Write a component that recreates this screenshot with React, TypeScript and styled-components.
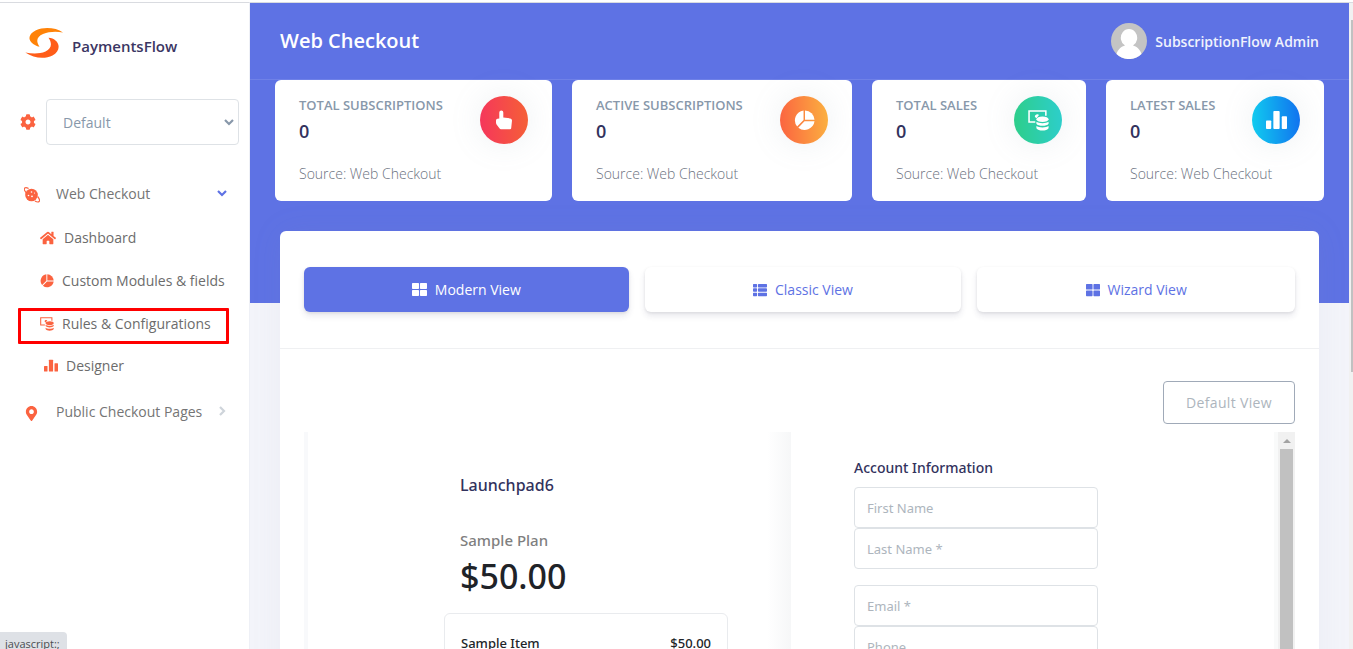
import React from 'react';
import styled, { createGlobalStyle } from 'styled-components';
import { FaCog, FaHome, FaMapMarkerAlt, FaThLarge, FaThList } from 'react-icons/fa';

const GlobalStyle = createGlobalStyle`
  *, *::before, *::after { box-sizing: border-box; }
  body { margin: 0; background: #f8f9fe; font-family: 'Open Sans', sans-serif; font-size: 14px; line-height: 20px; color: #525f7f; }
  h1, h2, h3, p, ul { margin: 0; padding: 0; }
  ul { list-style: none; }
  a { text-decoration: none; color: inherit; }
  button, input, select { font: inherit; }
  svg { display: block; flex: none; }
`;

const Page = styled.div`
  display: flex;
  height: 100vh;
  overflow: hidden;
  padding-top: 2px;
  background: #fff;
`;
const Sidebar = styled.aside`
  flex: none;
  width: 250px;
  background: #fff;
  border-top: 1px solid #d9dbe0;
  border-right: 1px solid #eef0f6;
`;
const Brand = styled.a`
  display: flex;
  align-items: center;
  gap: 8px;
  padding: 24px 24px 0 25px;
  font-size: 15px;
  font-weight: 600;
  color: #3b3663;
`;
const BrandName = styled.span`
  padding-top: 6px;
`;
const StoreRow = styled.div`
  display: flex;
  align-items: center;
  gap: 10px;
  margin-top: 40px;
  padding: 0 10px 0 20px;
  color: #fb6340;
`;
const SelectWrap = styled.div`
  position: relative;
  flex: 1;
`;
const StoreSelect = styled.select`
  appearance: none;
  display: block;
  width: 100%;
  height: 46px;
  padding: 2px 16px 0;
  border: 1px solid #dee2e6;
  border-radius: 4px;
  background: #fff;
  color: #8898aa;
`;
const SelectArrow = styled.span`
  position: absolute;
  right: 5px;
  top: 18px;
  pointer-events: none;
  color: #8898aa;
`;
const Nav = styled.nav`
  padding-top: 28px;
`;
const NavLink = styled.a`
  display: flex;
  align-items: center;
  height: 42px;
  padding: 0 22px 0 24px;
  color: #757575;
`;
const NavIcon = styled.span`
  width: 32px;
  padding-top: 2px;
  color: #fb6340;
`;
const NavText = styled.span`
  flex: 1;
`;
const Caret = styled.span<{ $active?: boolean }>`
  padding-bottom: 2px;
  color: ${p => (p.$active ? '#5e72e4' : '#ced4da')};
`;
const SubList = styled.ul`
  padding: 1px 0 5px;
`;
const SubLink = styled.a<{ $indent?: boolean; $marked?: boolean }>`
  position: relative;
  display: flex;
  align-items: center;
  gap: 8px;
  height: ${p => (p.$indent ? 41 : 43)}px;
  padding-left: ${p => (p.$indent ? 44 : 40)}px;
  color: #6c6c6c;
  &::after {
    content: '';
    display: ${p => (p.$marked ? 'block' : 'none')};
    position: absolute;
    left: 18px;
    right: 20px;
    top: 6px;
    bottom: 1px;
    border: 3px solid #f00;
    border-radius: 1px;
  }
`;
const SubIcon = styled.span`
  color: #fb6340;
`;

const Main = styled.main`
  flex: 1;
  min-width: 0;
  border-top: 1px solid #d9dbe0;
  background: #f3f4fa;
`;
const Hero = styled.section`
  padding-bottom: 102px;
  background: #5e72e4;
`;
const TopBar = styled.header`
  display: flex;
  align-items: center;
  justify-content: space-between;
  height: 77px;
  padding: 0 30px;
  border-bottom: 1px solid #6f81e7;
  color: #fff;
`;
const Title = styled.h1`
  font-size: 20px;
  line-height: 28px;
  font-weight: 600;
`;
const User = styled.a`
  display: flex;
  align-items: center;
  gap: 8px;
  font-weight: 600;
  color: #f0f2fd;
`;
const UserName = styled.span`
  padding-top: 2px;
`;
const Stats = styled.div`
  display: grid;
  grid-template-columns: 277fr 280fr 214fr 218fr;
  gap: 20px;
  padding: 0 25px;
`;
const StatCard = styled.article`
  min-width: 0;
  padding: 16px 24px;
  border-radius: 6px;
  background: #fff;
`;
const StatHead = styled.div`
  display: flex;
  justify-content: space-between;
`;
const StatLabel = styled.h2`
  font-size: 13px;
  line-height: 18px;
  font-weight: 600;
  text-transform: uppercase;
  white-space: nowrap;
  color: #8898aa;
`;
const StatValue = styled.p`
  font-size: 18px;
  line-height: 34px;
  font-weight: 600;
  color: #32325d;
`;
const StatSource = styled.p`
  padding-top: 15px;
  line-height: 22px;
  font-weight: 300;
  white-space: nowrap;
  color: #6b7280;
`;
const StatIcon = styled.span<{ $from: string; $to: string }>`
  flex: none;
  display: flex;
  align-items: center;
  justify-content: center;
  width: 48px;
  height: 48px;
  border-radius: 50%;
  background: linear-gradient(87deg, ${p => p.$from}, ${p => p.$to});
  box-shadow: 0 0 32px rgba(136, 152, 170, 0.15);
  color: #fff;
`;

const Panel = styled.section`
  position: relative;
  margin: -72px 30px 0;
  border-radius: 6px 6px 0 0;
  background: #fff;
  box-shadow: 0 0 32px rgba(136, 152, 170, 0.08);
`;
const ViewTabs = styled.div`
  display: grid;
  grid-template-columns: 325fr 317fr 318fr;
  gap: 16px;
  padding: 36px 24px;
  border-bottom: 1px solid #eff0f2;
`;
const ViewTab = styled.button<{ $active?: boolean }>`
  display: flex;
  align-items: center;
  justify-content: center;
  gap: 8px;
  height: 45px;
  border: 0;
  border-radius: 6px;
  background: ${p => (p.$active ? '#5e72e4' : '#fff')};
  color: ${p => (p.$active ? '#fff' : '#5e72e4')};
  box-shadow: 0 4px 6px rgba(50, 50, 93, 0.11), 0 1px 3px rgba(0, 0, 0, 0.08);
`;
const PanelBody = styled.div`
  padding: 32px 24px 24px;
`;
const Actions = styled.div`
  display: flex;
  justify-content: flex-end;
  padding-bottom: 8px;
`;
const OutlineButton = styled.button`
  min-width: 132px;
  height: 43px;
  padding: 0 20px;
  border: 1px solid #a0aab8;
  border-radius: 4px;
  background: #fff;
  font-weight: 500;
  letter-spacing: 0.025em;
  color: #adb5bd;
`;
const Preview = styled.div`
  display: grid;
  grid-template-columns: 1fr 1fr 17px;
  font-family: 'Noto Sans', sans-serif;
  height: 520px;
  overflow: hidden;
`;
const Summary = styled.section`
  display: flex;
  flex-direction: column;
  align-items: flex-end;
  padding: 39px 63px 0;
  border-left: 4px solid #f8f9fb;
  background: linear-gradient(to left, #f6f7f8, #fff 24px);
`;
const SummaryInner = styled.div`
  width: 284px;
`;
const Company = styled.h2`
  padding: 0 16px;
  font-size: 16px;
  line-height: 28px;
  font-weight: 500;
  color: #32325d;
`;
const PlanName = styled.p`
  padding: 29px 16px 0;
  font-size: 15px;
  line-height: 24px;
  font-weight: 500;
  color: #7f7f7f;
`;
const PlanPrice = styled.p`
  padding: 0 16px;
  font-size: 34px;
  line-height: 48px;
  font-weight: 500;
  color: #1f2328;
`;
const ItemBox = styled.div`
  display: flex;
  justify-content: space-between;
  height: 160px;
  margin-top: 13px;
  padding: 19px 16px;
  border: 1px solid #e9ebee;
  border-radius: 6px;
  font-size: 13px;
  font-weight: 500;
  color: #212529;
`;
const Account = styled.form`
  padding: 24px 63px 0;
  border-right: 4px solid #f9fafa;
`;
const AccountTitle = styled.h3`
  padding-bottom: 7px;
  font-size: 14px;
  line-height: 24px;
  font-weight: 500;
  color: #32325d;
`;
const FieldGroup = styled.div`
  width: 244px;
  padding-bottom: 16px;
`;
const Field = styled.input`
  display: block;
  width: 100%;
  height: 41px;
  padding: 0 12px;
  border: 1px solid #dee2e6;
  border-radius: 4px;
  background: #fff;
  font-size: 13px;
  &::placeholder { color: #adb5bd; opacity: 1; }
`;
const InnerScrollbar = styled.div`
  display: flex;
  flex-direction: column;
  align-items: center;
  background: #f1f1f1;
`;
const ScrollArrow = styled.span`
  display: flex;
  align-items: center;
  justify-content: center;
  height: 17px;
`;
const InnerThumb = styled.span`
  width: 13px;
  flex: 1;
  background: #c1c1c1;
`;
const PageScrollbar = styled.div`
  flex: none;
  width: 4px;
  padding: 17px 0 0 2px;
  border-top: 1px solid #d9dbe0;
  background: #f1f1f1;
`;
const PageThumb = styled.div`
  height: 56%;
  background: #c1c1c1;
`;
const StatusHint = styled.div`
  position: fixed;
  left: 0;
  bottom: 0;
  height: 17px;
  padding: 3px 7px 0 5px;
  border-top-right-radius: 4px;
  background: #dee1e6;
  font-size: 11px;
  line-height: 18px;
  color: #4a4d51;
  overflow: hidden;
`;

const Logo = () => (
  <svg width="39" height="32" viewBox="0 0 39 32" aria-hidden="true">
    <path d="M38 5.500C31 .5 19 -.3 11 3.200C4 6.500 2.500 12 7 16C9 18 11.500 19 14.500 19.800C10.500 14 12 9.500 18 7C24 4.600 31 4.200 38 5.500Z" fill="#ff8207" />
    <path d="M.3 25.500C9 31.500 20 32.300 27.500 28.500C34.500 25 35.500 17.500 30.500 13.500C28.500 11.800 26.500 11.200 23.500 10.800C27.500 16.500 26.500 21.500 20.500 24.500C14.500 27 7.500 26.800 .3 25.500Z" fill="#ff5d19" />
  </svg>
);
const PlanetIcon = () => (
  <svg width="16" height="16" viewBox="0 0 16 16" aria-hidden="true">
    <circle cx="7.500" cy="8" r="6.300" fill="currentColor" />
    <path d="M2 5.500C.3 3.500-.1 1.800.8 1C1.600.3 3 .6 4.600 1.500M13.600 9.500C15.300 11.500 15.900 13.700 15.100 14.500C14.400 15.200 12.700 15 10.900 14" fill="none" stroke="currentColor" strokeWidth="1.200" />
    <circle cx="7.500" cy="5" r=".8" fill="#fff" />
    <circle cx="4.500" cy="8.500" r=".8" fill="#fff" />
    <circle cx="8" cy="9.300" r=".9" fill="#fff" />
    <circle cx="10.500" cy="6" r=".6" fill="#fff" />
  </svg>
);
const CoinsIcon = ({ size, gap }: { size: number; gap: string }) => (
  <svg width={size} height={size} viewBox="0 0 20 20" aria-hidden="true">
    <path d="M7 11.500H1V1H17V5.500" fill="none" stroke="currentColor" strokeWidth="1.500" />
    <path d="M6.500 6.500A2.400 2.400 0 0 1 10.500 4.800L8 7.800Z" fill="currentColor" />
    <path d="M7.500 9V17.500C7.500 21 20 21 20 17.500V9Z" fill={gap} />
    <ellipse cx="13.800" cy="8.800" rx="5.800" ry="2.600" fill="currentColor" />
    <path d="M8 11.200C10 13 17.600 13 19.600 11.200V13C18 15.600 9.600 15.600 8 13Z" fill="currentColor" />
    <path d="M8 15.300C10 17.100 17.600 17.100 19.600 15.300V17.300C18 20.200 9.600 20.200 8 17.300Z" fill="currentColor" />
  </svg>
);
const BarsIcon = ({ size }: { size: number }) => (
  <svg width={size} height={size} viewBox="0 0 20 20" aria-hidden="true">
    <g fill="currentColor">
      <rect x="0" y="10" width="5" height="8" rx=".8" />
      <rect x="7" y="1" width="6" height="17" rx=".8" />
      <rect x="15" y="6" width="5" height="12" rx=".8" />
    </g>
  </svg>
);
const PieIcon = ({ size }: { size: number }) => (
  <svg width={size} height={size} viewBox="0 0 22 22" aria-hidden="true">
    <g fill="currentColor">
      <path d="M10 .5V10.500L3.300 17.200A10.300 10.300 0 0 1 10 .5Z" />
      <path d="M11.500 .5A10.300 10.300 0 0 1 21.500 10.300H11.500Z" />
      <path d="M4.500 18.500L11 11.900H21.500A10.500 10.500 0 0 1 4.500 18.500Z" />
    </g>
  </svg>
);
const TapIcon = () => (
  <svg width="18" height="20" viewBox="0 0 18 20" aria-hidden="true">
    <path d="M4.300 2.600A2 2 0 0 1 8.300 2.600V7.600L15.300 8.400Q17 8.700 17 10.400L16.200 18.200Q16 19.300 15 19.300H6Q5 19.300 4.400 18.300L1.400 14.200Q1 13.500 1 12.600V10.500Q1 8.900 2.500 8.700L4.300 8.400Z" fill="currentColor" />
  </svg>
);
const Chevron = ({ down }: { down?: boolean }) => (
  <svg width="10" height="10" viewBox="0 0 10 10" aria-hidden="true">
    <path d={down ? 'M1 3L5 7L9 3' : 'M3 1L7 5L3 9'} fill="none" stroke="currentColor" strokeWidth="2.200" />
  </svg>
);
const Avatar = () => (
  <svg width="36" height="36" viewBox="0 0 36 36" aria-hidden="true">
    <circle cx="18" cy="18" r="18" fill="#c4c4c4" />
    <path d="M5.500 31C7 26 10.500 23.500 14 22.500A8.200 8.800 0 1 1 22 22.500C25.500 23.500 29 26 30.500 31A18 18 0 0 1 5.500 31Z" fill="#fff" />
  </svg>
);

const stats = [
  { label: 'Total Subscriptions', from: '#f5365c', to: '#f56036', icon: <TapIcon /> },
  { label: 'Active Subscriptions', from: '#fb6340', to: '#fbb140', icon: <PieIcon size={21} /> },
  { label: 'Total Sales', from: '#2dce89', to: '#2dcecc', icon: <CoinsIcon size={21} gap="#2dceaa" /> },
  { label: 'Latest Sales', from: '#11cdef', to: '#1171ef', icon: <BarsIcon size={21} /> },
];

const subLinks = [
  { text: 'Dashboard', icon: <FaHome size={16} /> },
  { text: 'Custom Modules & fields', icon: <PieIcon size={14} /> },
  { text: 'Rules & Configurations', icon: <CoinsIcon size={14} gap="#fff" />, marked: true },
  { text: 'Designer', icon: <BarsIcon size={14} />, indent: true },
];

const fieldGroups = [
  ['First Name', 'Last Name *'],
  ['Email *', 'Phone'],
];

export default function App() {
  return (
    <>
      <GlobalStyle />
      <Page>
        <Sidebar>
          <Brand href="#">
            <Logo />
            <BrandName>PaymentsFlow</BrandName>
          </Brand>
          <StoreRow>
            <FaCog size={16} />
            <SelectWrap>
              <StoreSelect aria-label="Store">
                <option>Default</option>
              </StoreSelect>
              <SelectArrow>
                <Chevron down />
              </SelectArrow>
            </SelectWrap>
          </StoreRow>
          <Nav>
            <NavLink href="#">
              <NavIcon><PlanetIcon /></NavIcon>
              <NavText>Web Checkout</NavText>
              <Caret $active><Chevron down /></Caret>
            </NavLink>
            <SubList>
              {subLinks.map(item => (
                <li key={item.text}>
                  <SubLink href="#" $indent={item.indent} $marked={item.marked}>
                    <SubIcon>{item.icon}</SubIcon>
                    {item.text}
                  </SubLink>
                </li>
              ))}
            </SubList>
            <NavLink href="#">
              <NavIcon><FaMapMarkerAlt size={15} /></NavIcon>
              <NavText>Public Checkout Pages</NavText>
              <Caret><Chevron /></Caret>
            </NavLink>
          </Nav>
        </Sidebar>

        <Main>
          <Hero>
            <TopBar>
              <Title>Web Checkout</Title>
              <User href="#">
                <Avatar />
                <UserName>SubscriptionFlow Admin</UserName>
              </User>
            </TopBar>
            <Stats>
              {stats.map(stat => (
                <StatCard key={stat.label}>
                  <StatHead>
                    <div>
                      <StatLabel>{stat.label}</StatLabel>
                      <StatValue>0</StatValue>
                    </div>
                    <StatIcon $from={stat.from} $to={stat.to}>{stat.icon}</StatIcon>
                  </StatHead>
                  <StatSource>Source: Web Checkout</StatSource>
                </StatCard>
              ))}
            </Stats>
          </Hero>

          <Panel>
            <ViewTabs>
              <ViewTab type="button" $active><FaThLarge size={15} />Modern View</ViewTab>
              <ViewTab type="button"><FaThList size={14} />Classic View</ViewTab>
              <ViewTab type="button"><FaThLarge size={14} />Wizard View</ViewTab>
            </ViewTabs>
            <PanelBody>
              <Actions>
                <OutlineButton type="button">Default View</OutlineButton>
              </Actions>
              <Preview>
                <Summary>
                  <SummaryInner>
                    <Company>Launchpad6</Company>
                    <PlanName>Sample Plan</PlanName>
                    <PlanPrice>$50.00</PlanPrice>
                    <ItemBox>
                      <span>Sample Item</span>
                      <span>$50.00</span>
                    </ItemBox>
                  </SummaryInner>
                </Summary>
                <Account>
                  <AccountTitle>Account Information</AccountTitle>
                  {fieldGroups.map(group => (
                    <FieldGroup key={group[0]}>
                      {group.map(name => (
                        <Field key={name} type="text" placeholder={name} aria-label={name} />
                      ))}
                    </FieldGroup>
                  ))}
                </Account>
                <InnerScrollbar>
                  <ScrollArrow>
                    <svg width="8" height="4" viewBox="0 0 8 4" aria-hidden="true">
                      <path d="M0 4L4 0L8 4Z" fill="#a3a3a3" />
                    </svg>
                  </ScrollArrow>
                  <InnerThumb />
                </InnerScrollbar>
              </Preview>
            </PanelBody>
          </Panel>
        </Main>
        <PageScrollbar>
          <PageThumb />
        </PageScrollbar>
      </Page>
      <StatusHint>javascript:;</StatusHint>
    </>
  );
}
